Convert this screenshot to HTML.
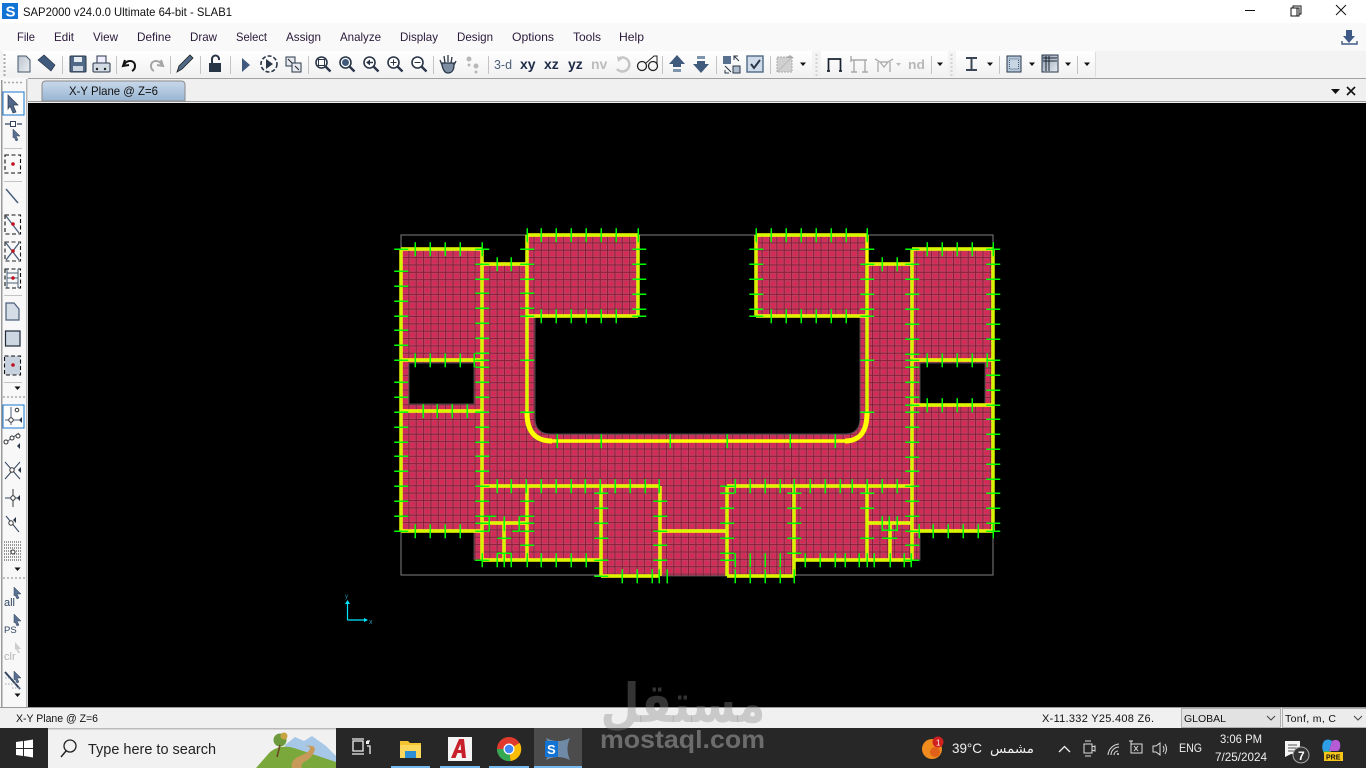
<!DOCTYPE html>
<html><head><meta charset="utf-8"><title>SAP2000</title>
<style>
html,body{margin:0;padding:0;width:1366px;height:768px;overflow:hidden;background:#000}
svg{display:block;position:absolute;left:0;top:0}
text{font-family:"Liberation Sans","DejaVu Sans",sans-serif;fill:#111;font-size:12px}
.m{fill:#2a1a3a}
.b{font-weight:bold;font-size:14px;fill:#1e2a48}
.t{fill:#eee}
</style></head><body>
<svg width="1366" height="768" viewBox="0 0 1366 768" xmlns="http://www.w3.org/2000/svg">
<defs>
<pattern id="mesh" patternUnits="userSpaceOnUse" x="401" y="235" width="7.36" height="7.36">
<rect width="7.36" height="7.36" fill="#8c1c36"/>
<rect x="1" y="1" width="6.36" height="6.36" fill="#b8486a"/>
<rect x="1.8" y="1.8" width="4.8" height="4.8" fill="#d42a56"/>
</pattern>
<linearGradient id="tab" x1="0" y1="0" x2="0" y2="1"><stop offset="0" stop-color="#c9d9ea"/><stop offset="1" stop-color="#98b5d3"/></linearGradient>
<linearGradient id="ic" x1="0" y1="0" x2="1" y2="1"><stop offset="0" stop-color="#3f5a7c"/><stop offset="1" stop-color="#dfe6ee"/></linearGradient>
<linearGradient id="tb" x1="0" y1="0" x2="0" y2="1"><stop offset="0" stop-color="#ffffff"/><stop offset="1" stop-color="#f1f1f1"/></linearGradient>
<g id="mag"><circle cx="-1.5" cy="-1.5" r="5.5" fill="#fff" stroke="#2a3648" stroke-width="1.6"/><path d="M2.5 2.5L7.5 7.5" stroke="#2a3648" stroke-width="2.4"/></g>
<path id="car" d="M-3 -1.5h6l-3 3.5z" fill="#111"/>
<path id="arw" d="M-5 -9L5 1L0 1L3 8L0 9L-3 2L-5 5z" fill="#52688a" stroke="#2b3a52" stroke-width=".7"/>
<path id="sarw" d="M-3 -6L4 1L0 1L2 5L0 6L-2 2L-3 3z" fill="#5a7090" stroke="#33445e" stroke-width=".5"/>
</defs>

<!-- backgrounds -->
<rect width="1366" height="768" fill="#f0f0f0"/>
<rect width="1366" height="23" fill="#fff"/>
<rect y="23" width="1366" height="28" fill="#f9f9f9"/>
<rect y="51" width="1366" height="27" fill="#f3f3f3"/>
<rect x="3" y="51" width="1092" height="26" fill="url(#tb)"/>
<rect x="0" y="78" width="28" height="629" fill="#f8f8f8"/>
<rect x="28" y="78" width="1338" height="1" fill="#a0a0a0"/>
<rect x="28" y="101" width="1338" height="1" fill="#9a9a9a"/>
<rect x="28" y="103" width="1338" height="604" fill="#000"/>
<rect x="0" y="707" width="1366" height="21" fill="#f0f0f0"/>
<rect x="1" y="80" width="1.5" height="627" fill="#9a9a9a"/>
<rect x="26" y="79" width="1.5" height="628" fill="#b5b5b5"/>

<!-- title bar -->
<rect x="2" y="3" width="16" height="16" fill="#1173d4"/>
<text x="5.5" y="16.5" style="font-size:15px;font-weight:bold;fill:#fff">S</text>
<text x="23" y="16" textLength="209" lengthAdjust="spacingAndGlyphs">SAP2000 v24.0.0 Ultimate 64-bit - SLAB1</text>
<path d="M1245 10.5h10" stroke="#111" fill="none"/>
<path d="M1291 8h8v8h-2M1291 8v-0M1293 8v-2h8v8h-2M1291 8h6v8h-6z" stroke="#111" fill="none"/>
<path d="M1336 5l10 10M1346 5l-10 10" stroke="#111" fill="none"/>

<!-- menu -->
<g class="menu">
<text class="m" x="17" y="41" textLength="18" lengthAdjust="spacingAndGlyphs">File</text>
<text class="m" x="54" y="41" textLength="20" lengthAdjust="spacingAndGlyphs">Edit</text>
<text class="m" x="93" y="41" textLength="25" lengthAdjust="spacingAndGlyphs">View</text>
<text class="m" x="137" y="41" textLength="34" lengthAdjust="spacingAndGlyphs">Define</text>
<text class="m" x="190" y="41" textLength="27" lengthAdjust="spacingAndGlyphs">Draw</text>
<text class="m" x="236" y="41" textLength="31" lengthAdjust="spacingAndGlyphs">Select</text>
<text class="m" x="286" y="41" textLength="35" lengthAdjust="spacingAndGlyphs">Assign</text>
<text class="m" x="340" y="41" textLength="41" lengthAdjust="spacingAndGlyphs">Analyze</text>
<text class="m" x="400" y="41" textLength="38" lengthAdjust="spacingAndGlyphs">Display</text>
<text class="m" x="457" y="41" textLength="36" lengthAdjust="spacingAndGlyphs">Design</text>
<text class="m" x="512" y="41" textLength="42" lengthAdjust="spacingAndGlyphs">Options</text>
<text class="m" x="573" y="41" textLength="28" lengthAdjust="spacingAndGlyphs">Tools</text>
<text class="m" x="619" y="41" textLength="25" lengthAdjust="spacingAndGlyphs">Help</text>
</g>
<path d="M1346 30h6v6h3l-6 7l-6-7h3z" fill="#3f5a86"/>
<path d="M1342 41v3h15v-3" fill="none" stroke="#3f5a86" stroke-width="1.4"/>

<!-- toolbar separators -->
<path d="M62.500 56v18M116.500 56v18M170.500 56v18M200.500 56v18M230.500 56v18M308.500 56v18M433.500 56v18M488.500 56v18M662.500 56v18M716.500 56v18M770.500 56v18M931.500 56v18M999.500 56v18M1077.500 56v18" stroke="#c4c4c4"/>
<path d="M4.500 54v22M816.500 54v22M951.500 54v22" stroke="#aaa" stroke-width="2" stroke-dasharray="2 2"/>
<rect x="812" y="51" width="9" height="26" fill="#eee" opacity=".6"/>
<rect x="948" y="51" width="8" height="26" fill="#eee" opacity=".6"/>

<!-- toolbar icons -->
<path d="M18 56h8l4 4v12h-12z" fill="url(#ic)" fill-opacity=".35" stroke="#44556a"/>
<path d="M38 60l6-5l11 10l-4 6z" fill="#3f5a7c" stroke="#2a3648" stroke-width=".7"/>
<rect x="70" y="56" width="16" height="16" rx="1" fill="#4f6986" stroke="#2a3648"/><rect x="74" y="57" width="8" height="5" fill="#e8edf2"/><rect x="73" y="66" width="10" height="5" fill="#cdd6e0"/>
<rect x="93" y="63" width="17" height="9" rx="1" fill="#d2dae4" stroke="#2a3648"/><rect x="97" y="56" width="9" height="7" fill="#eef" stroke="#2a3648"/><circle cx="97" cy="69" r="1.200" fill="#222"/><circle cx="105" cy="69" r="1.200" fill="#222"/>
<path d="M125 60l-2 6l6-1M124 65c3-6 11-5 11 1c0 2-1 4-3 5" fill="none" stroke="#111" stroke-width="2"/>
<path d="M161 60l2 6l-6-1M162 65c-3-6-11-5-11 1c0 2 1 4 3 5" fill="none" stroke="#a5a5a5" stroke-width="2"/>
<path d="M177 72l2-6l11-11l3 3l-11 11z" fill="#4f6986" stroke="#222" stroke-width=".8"/>
<rect x="209" y="63" width="12" height="9" fill="#263446"/><path d="M212 63v-4a3.500 3.500 0 0 1 7 0v1" fill="none" stroke="#263446" stroke-width="2"/>
<path d="M242 58l8 7l-8 7z" fill="#3f5a7c"/>
<circle cx="269" cy="64" r="8" fill="none" stroke="#2a3648" stroke-width="1.600" stroke-dasharray="4 2"/><path d="M266 59l7 5l-7 5z" fill="#2a3648"/>
<rect x="286" y="57" width="9" height="9" fill="#e6eaf0" stroke="#2a3648"/><rect x="292" y="63" width="9" height="9" fill="#e6eaf0" stroke="#2a3648"/><path d="M288 59l4 4M299 70l-4-4" stroke="#222"/>
<g><use href="#mag" x="323" y="64"/><rect x="318.500" y="59.500" width="6" height="6" fill="none" stroke="#2a3648"/></g>
<g><use href="#mag" x="347" y="64"/><circle cx="345.500" cy="62.500" r="3.500" fill="#3f5a7c"/></g>
<g><use href="#mag" x="371" y="64"/><path d="M366 62.500l4-3v6z" fill="#2a3648"/><path d="M369 62.500h4" stroke="#2a3648" stroke-width="1.500"/></g>
<g><use href="#mag" x="395" y="64"/><path d="M390.500 62.500h6M393.500 59.500v6" stroke="#2a3648"/></g>
<g><use href="#mag" x="419" y="64"/><path d="M414.500 62.500h6" stroke="#2a3648"/></g>
<path d="M442 65l-2-5M445 63l-1-7M448 62v-7M451 63l1-6M454 65l2-4M442 65c1 5 3 8 6 8s6-2 6-8v-2h-12z" fill="#7e8ea2" stroke="#2a3648" stroke-width="1.300"/>
<circle cx="469" cy="59" r="2.500" fill="#b8b8b8"/><circle cx="476" cy="66" r="2.500" fill="#b8b8b8"/><circle cx="469" cy="65" r="1.500" fill="#b8b8b8"/><circle cx="476" cy="72" r="1.500" fill="#b8b8b8"/>
<text x="494" y="69" style="font-size:13px;fill:#4a5f7a" textLength="18" lengthAdjust="spacingAndGlyphs">3-d</text>
<text class="b" x="520" y="69">xy</text><text class="b" x="544" y="69">xz</text><text class="b" x="568" y="69">yz</text>
<text class="b" x="591" y="69" style="fill:#bcbcbc">nv</text>
<path d="M618 59a7 7 0 1 1 -1 10" fill="none" stroke="#c6c6c6" stroke-width="2.500"/><path d="M617 56l5 3l-4 3z" fill="#c6c6c6"/>
<circle cx="642" cy="66" r="4.500" fill="none" stroke="#222" stroke-width="1.300"/><circle cx="653" cy="66" r="4.500" fill="none" stroke="#222" stroke-width="1.300"/><path d="M646 63l8-7h3v9" fill="none" stroke="#222"/>
<path d="M677 55l8 9h-4v3h-8v-3h-4z" fill="#3f5a7c"/><rect x="673" y="69" width="8" height="3" fill="#7e93ac"/>
<path d="M701 73l8-9h-4v-3h-8v3h-4z" fill="#3f5a7c"/><rect x="697" y="56" width="8" height="3" fill="#7e93ac"/>
<rect x="723" y="56" width="8" height="8" fill="#58708e"/><rect x="733" y="66" width="7" height="7" fill="#aebccc" stroke="#2a3648"/><path d="M734 56l5 5M738 56h-4v4M731 72l-6-6M725 70v3h4" fill="none" stroke="#2a3648"/>
<rect x="747" y="56" width="16" height="16" fill="#cfdbe8" stroke="#4f6986" stroke-width="1.400"/><path d="M751 64l3 4l6-8" fill="none" stroke="#2a3648" stroke-width="2"/>
<rect x="777" y="57" width="15" height="15" fill="#d0d0d0" stroke="#aaa" stroke-dasharray="2 1"/><path d="M778 71l13-13" stroke="#bbb"/><path d="M790 55l4 3h-8z" fill="#aaa"/>
<use href="#car" x="803" y="64"/>
<path d="M827 71h3M839 71h3M828.500 71v-12h12v12" fill="none" stroke="#1a2330" stroke-width="1.700"/>
<path d="M851 60h16M854 72v-12M865 72v-12M851 56v6M851 72h6M862 72h6" fill="none" stroke="#a9a9a9" stroke-width="1.400"/>
<path d="M875 59l5 3l8 0l5-3M878 72v-10M890 72v-10M880 62l4 5l4-5" fill="none" stroke="#b0b0b0" stroke-width="1.400"/><path d="M896 63h5l-2.500 3z" fill="#bbb"/>
<text x="908" y="69" style="font-size:13px;font-weight:bold;fill:#b8b8b8" textLength="17" lengthAdjust="spacingAndGlyphs">nd</text>
<use href="#car" x="940" y="64"/>
<path d="M966 58h11M971.500 58v12M966 70h11" stroke="#3a4656" stroke-width="2" fill="none"/>
<use href="#car" x="990" y="64"/>
<rect x="1007" y="56" width="14" height="16" fill="#b6c8dc" stroke="#2a3648"/><rect x="1009.500" y="59" width="9" height="10" fill="#c8d6e4" stroke="#4a5a70" stroke-dasharray="1 1"/>
<use href="#car" x="1032" y="64"/>
<rect x="1042" y="55" width="16" height="17" fill="url(#ic)" fill-opacity=".6" stroke="#2a3648"/><path d="M1043 58h14M1043 61h14M1046 56v15M1049 56v15" stroke="#1a2330"/>
<use href="#car" x="1068" y="64"/><use href="#car" x="1087" y="64"/>
<path d="M1095.500 52v25" stroke="#ddd"/>

<!-- tab strip -->
<path d="M42 101v-16q0-4 4-4h135q4 0 4 4v16z" fill="url(#tab)" stroke="#8a8a8a"/>
<text x="69" y="95" textLength="89" lengthAdjust="spacingAndGlyphs" fill="#111">X-Y Plane @ Z=6</text>
<path d="M1331 89h9l-4.500 5z" fill="#111"/>
<path d="M1347 87l8 8M1355 87l-8 8" stroke="#111" stroke-width="1.600"/>

<!-- left toolbar -->
<path d="M4 82.500h20" stroke="#aaa" stroke-width="1.500" stroke-dasharray="2 2"/>
<rect x="3" y="92" width="21" height="23" fill="#fdfdfd" stroke="#1a78cf"/>
<use href="#arw" x="13" y="104"/>
<path d="M5 124h6M17 124h5" stroke="#33445e" stroke-width="1.300"/><rect x="10.500" y="121.500" width="5" height="5" fill="#fff" stroke="#33445e"/><use href="#sarw" x="16" y="135"/>
<path d="M4 148.500h18M4 181.500h18M4 295.500h18M4 382.500h18" stroke="#c4c4c4"/>
<rect x="5" y="155" width="15.500" height="18" fill="none" stroke="#111" stroke-dasharray="4 2.500" stroke-width="1.100"/><circle cx="13" cy="164" r="1.800" fill="#c01020"/>
<path d="M6 189l12 14" stroke="#4a5f7a" stroke-width="1.500"/>
<rect x="5" y="215" width="15.500" height="19" fill="none" stroke="#111" stroke-dasharray="4 2.500" stroke-width="1.100"/><path d="M6 216l13 17" stroke="#4a5f7a" stroke-width="1.300"/><circle cx="13" cy="224" r="1.800" fill="#c01020"/>
<rect x="5" y="242" width="15.500" height="19" fill="none" stroke="#222" stroke-dasharray="4 2.500" stroke-width="1.100"/><path d="M6 243l13 17M19 243l-13 17" stroke="#4a5f7a" stroke-width="1.300"/><circle cx="13" cy="251" r="1.800" fill="#c01020"/>
<rect x="5" y="269" width="15.500" height="19" fill="none" stroke="#111" stroke-dasharray="4 2.500" stroke-width="1.100"/><path d="M7 269v19M18 269v19M7 273h11M7 278h11M7 283h11" stroke="#4a5f7a"/><circle cx="13" cy="278" r="1.800" fill="#c01020"/>
<path d="M6 303h8l5 6v11h-13z" fill="#d4dce5" stroke="#4a5f7a" stroke-width="1.200"/>
<rect x="5.500" y="331" width="14.500" height="15" fill="#cdd7e2" stroke="#1f2b3a" stroke-width="1.200"/>
<rect x="4.500" y="356" width="16" height="19" fill="#c8d2de" stroke="#111" stroke-dasharray="4 2.500" stroke-width="1.100"/><circle cx="13" cy="365" r="1.800" fill="#c01020"/>
<use href="#car" x="17.500" y="388"/>
<path d="M3 397h22" stroke="#aaa" stroke-width="1.500" stroke-dasharray="2 2"/>
<rect x="3" y="405" width="21" height="23" fill="#fdfdfd" stroke="#1a78cf"/>
<path d="M11 407v18M5 420h15" stroke="#4a5f7a"/><circle cx="11" cy="420" r="2.200" fill="#fff" stroke="#333"/><circle cx="17" cy="410" r="1.800" fill="none" stroke="#333"/><path d="M22 417v6l-3-3z" fill="#2a3648"/>
<path d="M5 443l14-10" stroke="#4a5f7a"/><circle cx="6" cy="442" r="2" fill="#fff" stroke="#333"/><circle cx="12" cy="438" r="2" fill="#fff" stroke="#333"/><circle cx="18" cy="436" r="2" fill="#fff" stroke="#333"/><path d="M20 443v6l-3-3z" fill="#2a3648"/>
<path d="M5 462l15 17M20 462l-15 17" stroke="#33445e"/><circle cx="12" cy="470" r="2.200" fill="#fff" stroke="#333"/><path d="M21 467v6l-3-3z" fill="#2a3648"/>
<path d="M5 498h14" stroke="#33445e"/><path d="M13 489v18" stroke="#999" stroke-width="2"/><circle cx="13" cy="498" r="2.200" fill="#fff" stroke="#333"/><path d="M20 495v6l-3-3z" fill="#2a3648"/>
<path d="M6 516l13 16" stroke="#33445e"/><circle cx="11" cy="523" r="2.200" fill="#fff" stroke="#333"/><path d="M16 517v6l-3-3z" fill="#2a3648"/>
<path d="M4 542h17M4 545h17M4 548h17M4 551h17M4 554h17M4 557h17M4 560h17" stroke="#333" stroke-dasharray="1 1"/><circle cx="13" cy="552" r="2" fill="#fff" stroke="#333"/>
<use href="#car" x="17.500" y="569"/>
<path d="M3 578h22" stroke="#aaa" stroke-width="1.500" stroke-dasharray="2 2"/>
<use href="#sarw" x="17" y="593"/><text x="4" y="606" style="font-size:11px;fill:#2f4560">all</text>
<use href="#sarw" x="17" y="620"/><text x="4" y="633" style="font-size:9.500px;fill:#2f4560">PS</text>
<path d="M15 642l6 7h-3l2 4h-2l-2-4l-1 1z" fill="#ccc"/><text x="4" y="660" style="font-size:11px;fill:#b5b5b5">clr</text>
<path d="M5 672l15 17" stroke="#33445e" stroke-width="2"/><path d="M5 678h8M5 684h12M12 688h8" stroke="#9aa8b8" stroke-dasharray="1.500 1.500"/><use href="#sarw" x="17" y="677"/>
<use href="#car" x="17.500" y="695"/>

<!-- drawing: bounding outline -->
<rect x="401" y="235" width="592" height="340" fill="none" stroke="#808080" stroke-width="1"/>

<!-- slab -->
<path fill="url(#mesh)" fill-rule="evenodd" stroke="#4a4a4a" stroke-width="1"
 d="M401 249H482V264H527V235H638V316H535V418Q535 434 551 434H845Q860 434 860 418V316H756V235H867V264H912V249H993V531H920V560H795V576H601V560H474V531H401Z
 M409 363H474V404H409Z M920 363H985V404H920Z"/>

<!-- yellow frames -->
<g fill="none" stroke="#ffff00" stroke-width="3.4">
<path d="M401 249V531M401 249H482M482 249V560M482 264H527M527 235H638M638 235V316M527 235V415M867 415V235M552 441H845M527 316H638M756 235H867M756 235V316M756 316H867M867 264H912M912 249V560M912 249H993M993 249V531M912 531H993M401 360H482M401 411H482M912 360H993M912 405H993M401 531H482M482 486H660M727 486H912M527 486V560M482 560H601M601 486V576M601 576H660M660 486V576M660 531H727M727 486V576M727 576H794M794 486V576M794 560H912M867 486V560M867 523H912M890 523V560M482 523H527M504 523V560"/>
</g>
<path fill="none" stroke="#ffff00" stroke-width="5" d="M527 413Q527 441 552 441M845 441Q867 441 867 413"/>
<path fill="none" stroke="#a8f000" stroke-width="1.100" d="M401 249V531M401 249H482M482 249V560M482 264H527M527 235H638M638 235V316M527 235V410M527 316H638M756 235H867M756 235V316M756 316H867M867 264H912M912 249V560M912 249H993M993 249V531M912 531H993M401 360H482M401 411H482M912 360H993M912 405H993M401 531H482M482 486H660M727 486H912M527 486V560M482 560H601M601 486V576M601 576H660M660 486V576M660 531H727M727 486V576M727 576H794M794 486V576M794 560H912M867 486V560M867 264V410M867 523H912M890 523V560M482 523H527M504 523V560"/>

<!-- green ticks -->
<g fill="none" stroke="#00ff00" stroke-width="1.500" transform="translate(.25 .25)">
<!-- x=401 --><path d="M394 249h14M394 271h14M394 286h14M394 301h14M394 316h14M394 330h14M394 345h14M394 360h14M394 382h14M394 397h14M394 412h14M394 427h14M394 442h14M394 456h14M394 471h14M394 486h14M394 501h14M394 516h14M394 531h14"/>
<!-- x=482 --><path d="M475 264h14M475 279h14M475 293h14M475 308h14M475 323h14M475 338h14M475 353h14M475 360h14M475 367h14M475 382h14M475 397h14M475 412h14M475 427h14M475 442h14M475 456h14M475 471h14M475 486h14M475 501h14M475 516h14M475 523h14M475 531h14M475 560h14M475 249h14"/>
<!-- x=527 --><path d="M520 249h14M520 264h14M520 279h14M520 293h14M520 308h14M520 316h14M520 360h14M520 412h14M520 501h14M520 516h14M520 523h14M520 531h14M520 545h14"/>
<!-- y=249 --><path d="M415 242v14M430 242v14M445 242v14M460 242v14M482 242v14"/>
<path d="M497 257v14M511 257v14"/>
<path d="M527 228v14M541 228v14M556 228v14M571 228v14M586 228v14M601 228v14M616 228v14M638 228v14"/>
<path d="M632 249h14M632 264h14M632 279h14M632 294h14M632 309h14M632 316h14"/>
<path d="M541 309v14M556 309v14M571 309v14M586 309v14M601 309v14M616 309v14"/>
<path d="M415 353v14M430 353v14M445 353v14M460 353v14M474 353v14"/>
<path d="M423 404v14M437 404v14M452 404v14M467 404v14"/>
<path d="M415 524v14M430 524v14M445 524v14M460 524v14"/>
<path d="M497 479v14M511 479v14M526 479v14M541 479v14M556 479v14M571 479v14M585 479v14M600 479v14M615 479v14M630 479v14M645 479v14M659 479v14"/>
<path d="M482 553v14M497 553v14M504 553v14M511 553v14M527 553v14M541 553v14M556 553v14M571 553v14M586 553v14"/>
<path d="M489 516v15M519 516v15M504 516v15M497 538h14M497 553h14M489 516h7M512 531h7"/>
<path d="M594 493h14M594 508h14M594 523h14M594 538h14M594 560h14M594 576h14"/>
<path d="M622 569v14M637 569v14M652 569v14M659 569v14M667 569v14"/>
<path d="M653 501h14M653 516h14M653 531h14M653 545h14M653 560h14"/>
<!-- curve --><path d="M557 434v14M601 434v14M670 434v14M727 434v14M790 434v14M835 434v14"/>
<!-- right side -->
<path d="M986 249h14M986 264h14M986 279h14M986 294h14M986 309h14M986 324h14M986 339h14M986 360h14M986 375h14M986 390h14M986 405h14M986 419h14M986 434h14M986 449h14M986 464h14M986 479h14M986 493h14M986 508h14M986 523h14M986 531h14"/>
<path d="M905 249h14M905 264h14M905 279h14M905 294h14M905 309h14M905 324h14M905 339h14M905 354h14M905 360h14M905 367h14M905 382h14M905 397h14M905 405h14M905 412h14M905 427h14M905 442h14M905 457h14M905 471h14M905 486h14M905 501h14M905 516h14M905 531h14M905 545h14M905 560h14"/>
<path d="M860 249h14M860 264h14M860 279h14M860 294h14M860 309h14M860 316h14M860 360h14M860 412h14M860 493h14M860 508h14M860 538h14"/>
<path d="M927 242v14M942 242v14M957 242v14M972 242v14M993 242v14"/>
<path d="M882 257v14M897 257v14"/>
<path d="M756 228v14M771 228v14M786 228v14M801 228v14M816 228v14M831 228v14M846 228v14M867 228v14"/>
<path d="M749 249h14M749 264h14M749 279h14M749 294h14M749 309h14M749 316h14"/>
<path d="M771 309v14M786 309v14M801 309v14M816 309v14M831 309v14M846 309v14"/>
<path d="M927 353v14M942 353v14M957 353v14M972 353v14M987 353v14"/>
<path d="M927 398v14M942 398v14M957 398v14M972 398v14"/>
<path d="M919 524v14M933 524v14M948 524v14M963 524v14M978 524v14M993 524v14"/>
<path d="M735 479v14M750 479v14M765 479v14M780 479v14M794 479v14M810 479v14M825 479v14M840 479v14M852 479v14M867 479v14M882 479v14M897 479v14"/>
<path d="M735 553v14M750 553v14M765 553v14M780 553v14M805 553v14M820 553v14M835 553v14M845 553v14M859 553v14M867 553v14M874 553v14M890 553v14M904 553v14M911 553v14"/>
<path d="M882 516v15M889 516v15M897 516v15M882 530h15M882 538h15"/>
<path d="M787 493h14M787 508h14M787 523h14M787 538h14M787 553h14"/>
<path d="M720 486h14M720 493h14M720 508h14M720 523h14M720 538h14M720 553h14M720 560h14"/>
<path d="M735 569v14M750 569v14M765 569v14M780 569v14M794 569v14"/>
</g>

<!-- axes -->
<path d="M347.500 620V601M347.500 620H367" fill="none" stroke="#00e5ff" stroke-width="1.200"/>
<path d="M345 604l2.500-4l2.500 4zM364 618l4 2l-4 2z" fill="#00e5ff"/>
<text x="345" y="598" style="font-size:6px;fill:#2a90a8">y</text>
<text x="369" y="624" style="font-size:7px;fill:#2a90a8">x</text>

<!-- status bar -->
<rect x="0" y="707" width="1366" height="1" fill="#9a9a9a"/>
<text x="16" y="722" textLength="82" lengthAdjust="spacingAndGlyphs" style="font-size:11px">X-Y Plane @ Z=6</text>
<text x="1042" y="722" textLength="112" lengthAdjust="spacing" style="font-size:11px">X-11.332  Y25.408  Z6.</text>
<rect x="1181.500" y="708.500" width="99" height="19" fill="#e2e2e2" stroke="#b0b0b0"/>
<text x="1184" y="722" style="font-size:10.500px">GLOBAL</text>
<path d="M1267 716l4 4l4-4" fill="none" stroke="#444"/>
<rect x="1282.500" y="708.500" width="84" height="19" fill="#ececec" stroke="#b0b0b0"/>
<text x="1285" y="722" style="font-size:10.500px" textLength="51" lengthAdjust="spacing">Tonf, m, C</text>
<path d="M1354 716l4 4l4-4" fill="none" stroke="#444"/>

<!-- taskbar -->
<rect x="0" y="728" width="1366" height="40" fill="#272727"/>
<path d="M16 742l7-1v7h-7zM24 741l9-1.500v8.500h-9zM16 749h7v7l-7-1zM24 749h9v8.500l-9-1.500z" fill="#fff"/>
<rect x="48" y="728" width="288" height="40" fill="#f1f1f1"/>
<rect x="48" y="728" width="288" height="1.500" fill="#bbb"/>
<circle cx="70" cy="746" r="6" fill="none" stroke="#222" stroke-width="1.300"/><path d="M66 751l-5 6" stroke="#222" stroke-width="1.400"/>
<text x="88" y="754" textLength="128" lengthAdjust="spacingAndGlyphs" style="font-size:15px;fill:#222">Type here to search</text>
<!-- search highlight picture -->
<path d="M285 745l10-8l9 4l8-5l14 10l10 10v12h-51z" fill="#a7c7e7"/>
<path d="M256 768l14-16q10-8 24-4l18 6l24 8v6z" fill="#7aa83a"/>
<path d="M292 768q-2-8 8-12q10-4 10-8q0-2-6-2q14-2 10 6q-2 6-10 10q-4 3-2 6z" fill="#c89a5a"/>
<circle cx="280" cy="740" r="6.500" fill="#6d9a3d"/><circle cx="284" cy="736" r="3.500" fill="#c8a440"/><path d="M280 745l-3 12" stroke="#6b4a25" stroke-width="1.600"/>
<!-- task view -->
<path d="M353 741h10v10h-10zM352 739h12M352 754h12M367 741h3M367 746h3v8" fill="none" stroke="#f0f0f0" stroke-width="1.300"/>
<rect x="366" y="741" width="3" height="3" fill="#f0f0f0"/>
<!-- explorer -->
<path d="M400 741h8l2 2h11v15h-21z" fill="#f4c430"/><rect x="400" y="745" width="21" height="13" fill="#fbd75b"/><rect x="405" y="751" width="11" height="7" fill="#2d8fd5"/>
<!-- autocad -->
<rect x="448" y="737" width="24" height="24" fill="#f4f4f4"/>
<path d="M451 758l8-19h5l2 19h-4l-.5-5h-4l-2 5zM458 750h3l-.5-6z" fill="#c8202a"/>
<!-- chrome -->
<circle cx="509" cy="749" r="12" fill="#e0392d"/>
<path d="M509 749L498.600 755a12 12 0 0 0 12 6z" fill="#34a853"/><path d="M509 749l1.600 12a12 12 0 0 0 9-18z" fill="#fbbc05"/><path d="M497 749a12 12 0 0 0 4 9l8-9z" fill="#34a853"/>
<circle cx="509" cy="749" r="5.500" fill="#fff"/><circle cx="509" cy="749" r="4.300" fill="#4285f4"/>
<!-- SAP -->
<rect x="534" y="728" width="48" height="38" fill="#4c4c4c"/>
<path d="M546 738q12 6 24 0q-5 11 0 22q-12-6-24 0q5-11 0-22z" fill="#6f8aa6"/>
<rect x="545" y="741" width="13" height="16" fill="#1173d4"/>
<text x="547" y="754" style="font-size:13px;font-weight:bold;fill:#fff">S</text>
<!-- running bars -->
<rect x="391" y="766" width="39" height="2" fill="#76b9ed"/><rect x="440" y="766" width="40" height="2" fill="#76b9ed"/><rect x="489" y="766" width="40" height="2" fill="#76b9ed"/><rect x="534" y="766" width="48" height="2" fill="#76b9ed"/>

<!-- watermark -->
<text x="683" y="722" text-anchor="middle" style="font-family:'DejaVu Sans',sans-serif;font-size:54px;font-weight:bold;fill:#8a8a8a;fill-opacity:.38" textLength="165" lengthAdjust="spacingAndGlyphs">مستقل</text>
<text x="600" y="748" textLength="165" lengthAdjust="spacingAndGlyphs" style="font-size:25px;font-weight:bold;fill:#8a8a8a;fill-opacity:.7">mostaql.com</text>

<!-- tray -->
<circle cx="932" cy="749" r="10" fill="#f08c1e"/><circle cx="935" cy="752" r="5" fill="#e0601a"/>
<circle cx="938" cy="742" r="5.500" fill="#d02020"/><text x="936" y="745.500" style="font-size:8px;fill:#fff">1</text>
<text class="t" x="952" y="753" style="font-size:14px" textLength="30" lengthAdjust="spacingAndGlyphs">39°C</text>
<text class="t" x="990" y="753" style="font-family:'DejaVu Sans',sans-serif;font-size:13px" textLength="44" lengthAdjust="spacingAndGlyphs">مشمس</text>
<path d="M1059 752l5.500-5.500l5.500 5.500" fill="none" stroke="#eee" stroke-width="1.300"/>
<path d="M1084 744h8v9h-8zM1092 747l3-1v5l-3-1M1085 741h6M1085 756h6" fill="none" stroke="#ddd"/>
<path d="M1108 755a12 12 0 0 1 11-11M1111 755a8 8 0 0 1 8-8M1114 755a4 4 0 0 1 4-4" fill="none" stroke="#ddd"/><circle cx="1118" cy="754" r="1" fill="#ddd"/>
<path d="M1131 744h11v9h-11zM1134 746l4 5M1138 746l-4 5M1131 741v3M1129 741h4" fill="none" stroke="#ddd"/>
<path d="M1153 746h3l4-3v12l-4-3h-3zM1163 746q2 3 0 6M1165 744q3 5 0 10" fill="none" stroke="#ddd"/>
<text class="t" x="1179" y="752" textLength="23" lengthAdjust="spacingAndGlyphs">ENG</text>
<text class="t" x="1220" y="743" textLength="42" lengthAdjust="spacingAndGlyphs">3:06 PM</text>
<text class="t" x="1215" y="761" textLength="52" lengthAdjust="spacingAndGlyphs">7/25/2024</text>
<path d="M1285 741h15v13h-9l-6 3z" fill="#f5f5f5"/><path d="M1288 745h9M1288 748h9M1288 751h6" stroke="#555"/>
<circle cx="1301" cy="755" r="8" fill="#333" stroke="#aaa"/><text x="1298" y="760" style="font-size:12px;font-weight:bold;fill:#fff">7</text>
<path d="M1324 741q4-3 8 0l-3 10h-6q-2-5 1-10z" fill="#2e9fe6"/><path d="M1332 741q6-3 8 2q1 6-2 8h-9z" fill="#b65bd6"/><path d="M1323 751h8l-1 5h-5z" fill="#3ab35a"/>
<rect x="1324" y="752" width="19" height="9" fill="#f5c518"/><text x="1326" y="759.500" style="font-size:7px;font-weight:bold;fill:#111">PRE</text>
</svg>
</body></html>
